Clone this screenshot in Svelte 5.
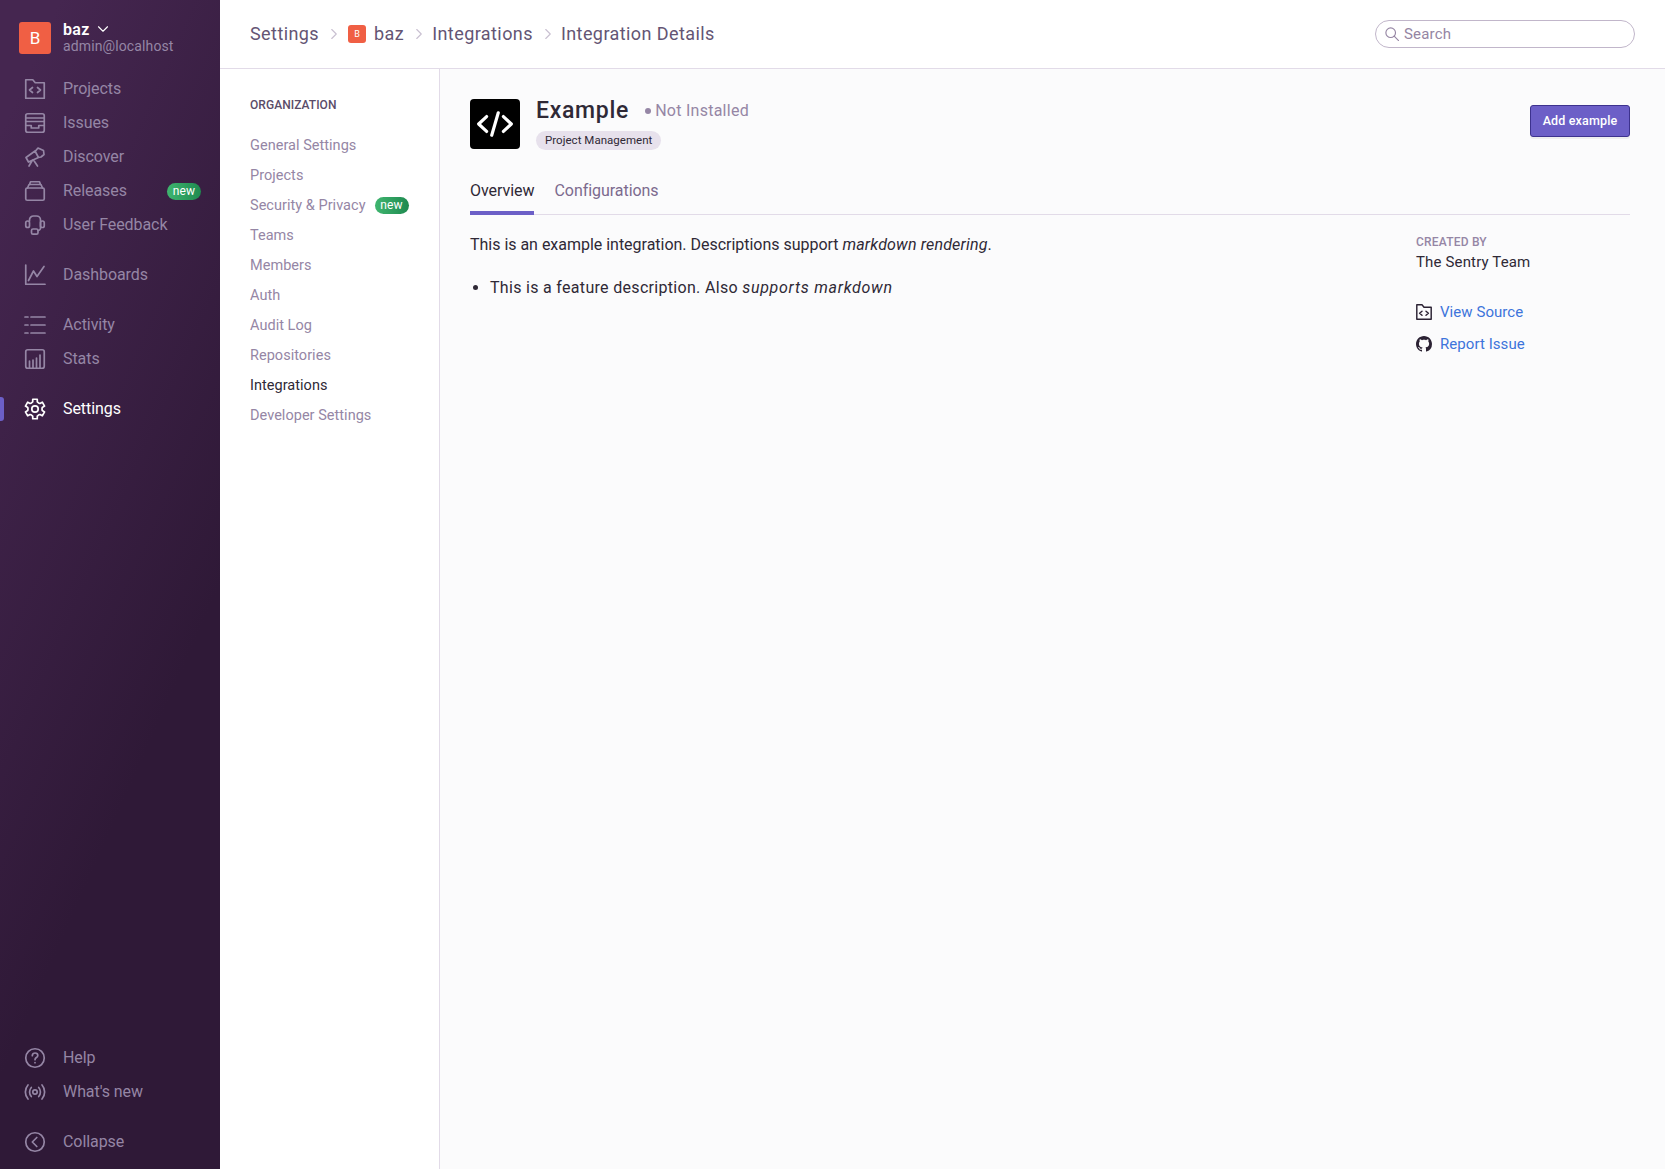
<script>
  const org = ['General Settings','Projects','Security & Privacy','Teams','Members','Auth','Audit Log','Repositories','Integrations','Developer Settings'];

  function gearPath() {
    const pts = [];
    const pt = (r, deg) => {
      const a = (deg * Math.PI) / 180;
      return `${(10 + r * Math.cos(a)).toFixed(2)} ${(10 + r * Math.sin(a)).toFixed(2)}`;
    };
    for (let k = 0; k < 6; k++) {
      const c = k * 60 - 90;
      pts.push(pt(7, c - 30), pt(7.4, c - 18), pt(10, c - 13), pt(10, c + 13), pt(7.4, c + 18));
    }
    return 'M' + pts.join('L') + 'Z';
  }
  const gear = gearPath();
</script>

<div class="page">
  <aside class="side">
    <div class="org">
      <div class="avatar">B</div>
      <div class="orgtext">
        <div class="orgname">baz <svg class="caret" viewBox="0 0 16 16" width="12" height="12"><path d="M2 5l6 6 6-6" fill="none" stroke="#fff" stroke-width="1.5" stroke-linecap="round" stroke-linejoin="round"/></svg></div>
        <div class="email">admin@localhost</div>
      </div>
    </div>

    <nav class="group first">
      <a class="item"><svg class="ic" viewBox="0 0 20 20"><path d="M.75 19.25V.75h7l2.5 3h9v15.500z"/><path d="M7.500 8.500L4.500 11l3 2.500M12.500 8.500l3 2.500-3 2.500"/></svg>Projects</a>
      <a class="item"><svg class="ic" viewBox="0 0 20 20"><rect x=".75" y=".75" width="18.5" height="18.5" rx="2"/><path d="M.75 5h18.500M.75 8.500h18.500M.75 12.500h5.500v2.500h7.500v-2.500h5.500"/></svg>Issues</a>
      <a class="item"><svg class="ic" viewBox="0 0 20 20"><path d="M1 10.500l9-6.500 3.500 6.500L3.500 15zM10.500 4l2.500-3 5.500 2.500.5 4-3 2.500-2.500.5M7.500 13l-3.500 6M8.500 13l4 6"/></svg>Discover</a>
      <a class="item"><svg class="ic" viewBox="0 0 20 20"><rect x=".75" y="7" width="18.5" height="12.25" rx="1.5"/><path d="M2.500 7L4 3.500h12L17.500 7M4.500 3.500L5.500 .75h9l1 2.750"/></svg>Releases<span class="new">new</span></a>
      <a class="item"><svg class="ic" viewBox="0 0 20 20"><path d="M4.500 6V5a4 4 0 0 1 4-4h3a4 4 0 0 1 4 4v8a2.500 2.500 0 0 1-2.500 2.500"/><rect x=".75" y="6" width="3.750" height="6.500" rx="1.800"/><rect x="15.500" y="6" width="3.750" height="6.500" rx="1.800"/><rect x="6.500" y="14" width="6.500" height="5.200" rx="1.500"/></svg>User Feedback</a>
    </nav>
    <nav class="group">
      <a class="item"><svg class="ic" viewBox="0 0 20 20"><path d="M.75 0v19.250H20M3.500 15.500l5-9.500 3.500 5.500L19 1.500"/></svg>Dashboards</a>
    </nav>
    <nav class="group">
      <a class="item"><svg class="ic" viewBox="0 0 20 20"><path d="M6 2h14M6 10h14M6 18h14M0 2h3M0 10h3M0 18h3"/></svg>Activity</a>
      <a class="item"><svg class="ic" viewBox="0 0 20 20"><rect x=".75" y=".75" width="18.500" height="18.500" rx="2"/><path d="M4.500 12v7M8 11v8M11.500 9v10M15 6v13"/></svg>Stats</a>
    </nav>
    <nav class="group">
      <a class="item active"><svg class="ic" viewBox="0 0 20 20"><circle cx="10" cy="10" r="3.200"/><path d={gear}/></svg>Settings</a>
    </nav>

    <div class="spacer"></div>

    <nav class="group bottom">
      <a class="item"><svg class="ic" viewBox="0 0 20 20"><circle cx="10" cy="10" r="9.250"/><path d="M7.300 7.700c0-1.700 1.200-2.700 2.800-2.700s2.700 1 2.700 2.400c0 2.200-2.800 2.100-2.800 4.300"/><circle class="dot" cx="10" cy="14.700" r=".9"/></svg>Help</a>
      <a class="item"><svg class="ic" viewBox="0 0 20 20"><circle cx="10" cy="10" r="2.200"/><path d="M6.300 5.500c-2.300 2.500-2.300 6.500 0 9M13.700 5.500c2.300 2.500 2.300 6.500 0 9M3 3c-3.500 4-3.500 10 0 14M17 3c3.500 4 3.500 10 0 14"/></svg>What's new</a>
    </nav>
    <nav class="group collapse">
      <a class="item"><svg class="ic" viewBox="0 0 20 20"><circle cx="10" cy="10" r="9.250"/><path d="M11.800 5.500L7.300 10l4.500 4.500"/></svg>Collapse</a>
    </nav>
  </aside>

  <div class="main">
    <header class="top">
      <div class="crumbs">
        <span>Settings</span>
        <svg class="chev" viewBox="0 0 16 16"><path d="M5 2l6 6-6 6"/></svg>
        <span class="mini">B</span><span class="bazc">baz</span>
        <svg class="chev" viewBox="0 0 16 16"><path d="M5 2l6 6-6 6"/></svg>
        <span>Integrations</span>
        <svg class="chev" viewBox="0 0 16 16"><path d="M5 2l6 6-6 6"/></svg>
        <span>Integration Details</span>
      </div>
      <div class="search">
        <svg viewBox="0 0 16 16" width="14" height="14"><circle cx="6.500" cy="6.500" r="5.500"/><path d="M10.500 10.500L15.500 15.500"/></svg>
        <span>Search</span>
      </div>
    </header>

    <div class="body">
      <nav class="sub">
        <div class="subhead">ORGANIZATION</div>
        {#each org as o}
          <a class="subitem" class:cur={o === 'Integrations'}>{o}{#if o.startsWith('Security')}<span class="new">new</span>{/if}</a>
        {/each}
      </nav>
      <main class="content">
        <div class="head">
          <div class="logo">
            <svg viewBox="0 0 40 30" width="38" height="28"><path d="M11 7L2.500 15l8.500 8M29 7l8.500 8-8.500 8M23.500 3l-7 24" fill="none" stroke="#fff" stroke-width="3.400" stroke-linecap="round" stroke-linejoin="round"/></svg>
          </div>
          <div class="titles">
            <div class="titleline"><span class="title">Example</span><span class="status"><i></i>Not Installed</span></div>
            <span class="pill">Project Management</span>
          </div>
          <button class="add">Add example</button>
        </div>
        <div class="tabs">
          <a class="tab on">Overview</a>
          <a class="tab">Configurations</a>
        </div>
        <div class="cols">
          <div class="desc">
            <p>This is an example integration. Descriptions support <em>markdown rendering</em>.</p>
            <ul><li>This is a feature description. Also <em>supports markdown</em></li></ul>
          </div>
          <div class="meta">
            <div class="label">CREATED BY</div>
            <div class="team">The Sentry Team</div>
            <a class="link"><svg viewBox="0 0 20 20" width="16" height="16" class="lic"><path d="M1 19V1h6.500l2.500 3h9v15z"/><path d="M7.500 9l-3 2.500 3 2.500M12.500 9l3 2.500-3 2.500"/></svg>View Source</a>
            <a class="link"><svg viewBox="0 0 16 16" width="16" height="16"><path fill="#2b2233" d="M8 0C3.580 0 0 3.580 0 8c0 3.540 2.290 6.530 5.470 7.590.4.070.55-.170.55-.380 0-.190-.010-.820-.010-1.490-2.010.370-2.530-.490-2.690-.940-.090-.230-.480-.940-.820-1.130-.280-.150-.680-.520-.010-.530.630-.010 1.080.580 1.230.820.720 1.210 1.870.870 2.330.660.070-.520.280-.870.510-1.070-1.780-.200-3.640-.890-3.640-3.950 0-.870.310-1.590.820-2.150-.080-.200-.360-1.020.080-2.120 0 0 .670-.210 2.200.820.640-.180 1.320-.270 2-.270s1.360.090 2 .270c1.530-1.040 2.200-.820 2.200-.820.440 1.100.160 1.920.080 2.120.510.560.820 1.270.820 2.150 0 3.070-1.870 3.750-3.650 3.950.290.250.540.730.540 1.480 0 1.070-.010 1.930-.010 2.200 0 .210.150.460.550.380A8.013 8.013 0 0 0 16 8c0-4.420-3.580-8-8-8z"/></svg>Report Issue</a>
          </div>
        </div>
      </main>
    </div>
  </div>
</div>

<style>
  :global(body) { margin: 0; font-family: Roboto, "Liberation Sans", sans-serif; }
  a { text-decoration: none; cursor: pointer; }
  .page { display: flex; height: 1169px; overflow: hidden; background: #fbfbfc; color: #2f2936; }

  .side { width: 220px; flex: none; display: flex; flex-direction: column; box-sizing: border-box; background: linear-gradient(294deg, #2f1937 35%, #452650 92%); color: #9586a5; padding-top: 22px; }
  .org { display: flex; gap: 12px; padding-left: 19px; height: 32px; margin-bottom: 18px; }
  .avatar { width: 32px; height: 32px; border-radius: 3px; background: #f05f44; color: #fff; font-size: 17px; display: flex; align-items: center; justify-content: center; }
  .orgtext { line-height: 16px; }
  .orgname { color: #fff; font-size: 16px; font-weight: 600; height: 16px; line-height: 15px; letter-spacing: .3px; }
  .caret { margin-left: 3px; }
  .email { font-size: 14px; color: #9586a5; letter-spacing: .12px; margin-top: -1px; line-height: 18px; }
  .group { display: flex; flex-direction: column; margin-bottom: 16px; }
  .item { display: flex; align-items: center; height: 34px; box-sizing: border-box; padding: 0 0 2px 25px; font-size: 16px; color: #9586a5; position: relative; letter-spacing: -.07px; }
  .ic { width: 20px; height: 20px; margin: 2px 18px 0 0; fill: none; stroke: #9586a5; stroke-width: 1.700; stroke-linecap: round; stroke-linejoin: round; flex: none; overflow: visible; }
  .ic .dot { fill: #9586a5; stroke: none; }
  .item.active { color: #fff; }
  .item.active .ic { stroke: #fff; }
  .item.active::before { content: ""; position: absolute; left: 0; top: 5px; width: 4px; height: 24px; background: #6c5fc7; border-radius: 0 3px 3px 0; }
  .item .new { margin: 2px 19px 0 auto; }
  .spacer { flex: 1; }
  .group.bottom { margin-bottom: 16px; }
  .group.collapse { margin-bottom: 10px; }
  .new { display: inline-block; width: 34px; height: 17px; line-height: 16px; border-radius: 9px; background: linear-gradient(90deg, #3fb56f, #1f8a50); color: #fff; font-size: 12px; text-align: center; letter-spacing: .2px; }

  .main { flex: 1; display: flex; flex-direction: column; min-width: 0; }
  .top { height: 69px; box-sizing: border-box; background: #fff; border-bottom: 1px solid #e2dbe8; display: flex; align-items: center; justify-content: space-between; padding: 0 30px; }
  .crumbs { display: flex; align-items: center; font-size: 18px; line-height: 24px; color: #645574; letter-spacing: .42px; padding-bottom: 1px; }
  .chev { width: 12px; height: 12px; margin: 0 7px 0 9px; fill: none; stroke: #c9c0d1; stroke-width: 1.500; stroke-linecap: round; stroke-linejoin: round; }
  .mini { width: 18px; height: 18px; border-radius: 3px; background: #f05f44; color: #fff; font-size: 9px; display: flex; align-items: center; justify-content: center; margin: 1px 8px 0 1px; letter-spacing: 0; }
  .search { width: 260px; height: 28px; box-sizing: border-box; border: 1px solid #c1b6ca; border-radius: 14px; display: flex; align-items: center; padding-left: 9px; gap: 5px; color: #9585a3; font-size: 15px; letter-spacing: .2px; }
  .search svg { fill: none; stroke: #9585a3; stroke-width: 1.300; stroke-linecap: round; }

  .body { flex: 1; display: flex; min-height: 0; }
  .sub { width: 220px; flex: none; box-sizing: border-box; background: #fff; border-right: 1px solid #e2dbe8; padding: 28px 0 0 30px; display: flex; flex-direction: column; }
  .subhead { font-size: 12px; font-weight: 500; color: #5a4c69; line-height: 16px; margin-bottom: 17px; letter-spacing: .05px; }
  .subitem { height: 30px; display: flex; align-items: center; font-size: 14.500px; color: #9586a5; letter-spacing: .03px; }
  .subitem.cur { color: #2f2936; }
  .subitem .new { margin-left: 9px; }

  .content { flex: 1; padding: 30px 35px 0 30px; min-width: 0; }
  .head { display: flex; height: 50px; margin-bottom: 19px; }
  .logo { width: 50px; height: 50px; border-radius: 4px; background: #000; display: flex; align-items: center; justify-content: center; }
  .titles { margin-left: 16px; display: flex; flex-direction: column; align-items: flex-start; }
  .titleline { display: flex; align-items: center; height: 23px; }
  .title { font-size: 23px; font-weight: 500; color: #2f2936; line-height: 23px; letter-spacing: .72px; }
  .status { margin-left: 16px; font-size: 16px; color: #9586a5; display: flex; align-items: center; letter-spacing: .26px; }
  .status i { width: 6px; height: 6px; border-radius: 50%; background: #9586a5; margin-right: 4px; margin-top: 1px; }
  .pill { margin-top: 9px; height: 19px; line-height: 19px; border-radius: 10px; background: #e7e1ec; font-size: 11.500px; color: #2f2936; padding: 0 9px; letter-spacing: .03px; }
  .add { margin-left: auto; margin-top: 6px; height: 32px; width: 100px; box-sizing: border-box; border: 1px solid #3d328e; border-radius: 3px; background: #6c5fc7; color: #fff; font: 500 12.500px Roboto, sans-serif; box-shadow: 0 2px rgba(0,0,0,.05); padding: 0 0 1px; letter-spacing: .15px; }
  .tabs { display: flex; gap: 20px; border-bottom: 1px solid #e2dbe8; height: 46px; }
  .tab { height: 47px; box-sizing: border-box; line-height: 46px; font-size: 16px; color: #7c6a8e; letter-spacing: -.05px; }
  .tab.on { color: #2f2936; border-bottom: 4px solid #6c5fc7; }
  .cols { display: flex; justify-content: space-between; padding-top: 18px; }
  .desc { font-size: 16px; line-height: 24px; color: #2f2936; }
  .desc p { margin: 0 0 19px; letter-spacing: -.02px; }
  .desc p em { letter-spacing: .17px; }
  .desc ul { margin: 0; padding-left: 20px; letter-spacing: .31px; }
  .desc li em { letter-spacing: .72px; }
  .meta { width: 214px; flex: none; display: flex; flex-direction: column; }
  .label { font-size: 12px; font-weight: 500; color: #9586a5; line-height: 14px; letter-spacing: .2px; margin-top: 2px; }
  .team { font-size: 15px; line-height: 22px; margin-top: 2px; margin-bottom: 23px; letter-spacing: .15px; }
  .link { display: flex; align-items: center; height: 32px; font-size: 15px; color: #3d74db; gap: 8px; letter-spacing: .06px; }
  .lic { fill: none; stroke: #2b2233; stroke-width: 1.800; stroke-linecap: round; stroke-linejoin: round; }
</style>
